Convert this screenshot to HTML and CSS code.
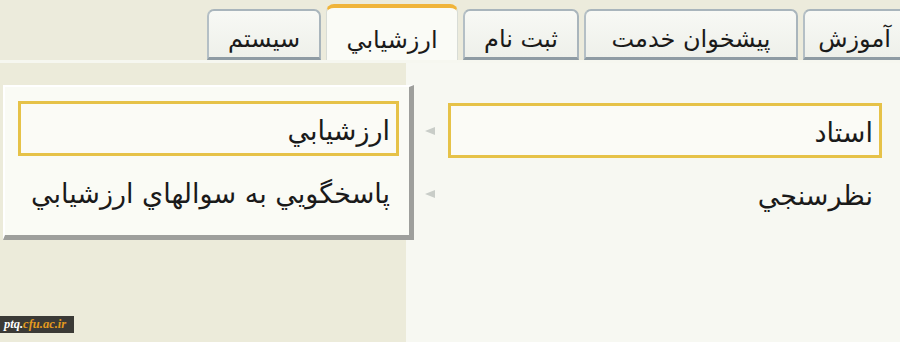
FILE: index.html
```html
<!DOCTYPE html>
<html lang="fa">
<head>
<meta charset="utf-8">
<title>ارزشيابي</title>
<link rel="stylesheet" href="styles.css">
</head>
<body>
<div class="page">
  <div class="tabbar" dir="rtl">
    <div class="tab tab--w110">آموزش</div>
    <div class="tab tab--w214">پيشخوان خدمت</div>
    <div class="tab tab--w116">ثبت نام</div>
    <div class="tab tab--active">ارزشيابي</div>
    <div class="tab tab--w114">سيستم</div>
  </div>
  <div class="content">
    <div class="left-panel"></div>
    <div class="right-panel" dir="rtl">
      <div class="row">
        <div class="item item--selected">استاد</div>
        <div class="arrow"></div>
      </div>
      <div class="row">
        <div class="item">نظرسنجي</div>
        <div class="arrow"></div>
      </div>
    </div>
  </div>
  <div class="popup" dir="rtl">
    <div class="item item--selected">ارزشيابي</div>
    <div class="item">پاسخگويي به سوالهاي ارزشيابي</div>
  </div>
  <div class="watermark"><span class="wm-a">ptq.</span><span class="wm-b">cfu.ac.ir</span></div>
</div>
</body>
</html>
```
FILE: styles.css
```css
* { box-sizing: border-box; }
html, body { margin: 0; padding: 0; }
body {
  width: 900px;
  height: 342px;
  overflow: hidden;
  font-family: "DejaVu Sans", "Liberation Sans", sans-serif;
  color: #1a1a1a;
  background: #f7f8f2;
}
.page {
  position: relative;
  width: 900px;
  height: 342px;
  overflow: hidden;
  display: flex;
  flex-direction: column;
}
.tabbar {
  height: 60px;
  flex: none;
  display: flex;
  align-items: flex-end;
  gap: 5px;
  margin-right: -13px;
  background: #ecebdc;
}
.tab {
  flex: none;
  height: 51px;
  display: flex;
  align-items: center;
  justify-content: center;
  font-size: 24px;
  line-height: 1;
  padding-top: 10px;
  background: linear-gradient(#f8f9f5, #eef0ea);
  border: 2px solid #a9b5bc;
  border-bottom: 3px solid #8e9ba3;
  border-left-color: #b4bfc5;
  border-radius: 7px 7px 0 0;
  white-space: nowrap;
}
.tab--w110 { width: 110px; justify-content: flex-start; padding-right: 20px; }
.tab--w214 { width: 214px; }
.tab--w116 { width: 116px; }
.tab--w114 { width: 114px; }
.tab--active {
  width: 132px;
  height: 56px;
  padding-top: 12px;
  background: #fafbf6;
  border: 1px solid #d8dcd6;
  border-top: 4px solid #f0b43a;
  border-bottom: none;
  border-radius: 8px 8px 0 0;
}
.content {
  flex: 1;
  display: flex;
  border-top: 3px solid #f6f7f0;
}
.left-panel {
  width: 406px;
  flex: none;
  background: #ecebda;
}
.right-panel {
  flex: 1;
  background: #f7f8f2;
  padding: 40px 18px 0 0;
  display: flex;
  flex-direction: column;
  gap: 8px;
}
.row {
  display: flex;
  align-items: center;
}
.item {
  flex: 1;
  height: 55px;
  display: flex;
  align-items: center;
  padding: 3px 6px 0;
  font-size: 27px;
  border: 3px solid transparent;
  white-space: nowrap;
}
.item--selected {
  border-color: #e6c248;
  background: #fbfbf6;
}
.arrow {
  width: 42px;
  display: flex;
  justify-content: center;
}
.arrow::before {
  content: "";
  border-style: solid;
  border-width: 4px 10px 4px 0;
  border-color: transparent #c9cdc8 transparent transparent;
  margin-left: 6px;
}
.popup {
  position: absolute;
  left: 3px;
  top: 85px;
  width: 411px;
  height: 155px;
  background: #fafbf5;
  border-top: 2px solid #ffffff;
  border-left: 2px solid #ffffff;
  border-right: 5px solid #9e9f9c;
  border-bottom: 5px solid #9e9f9c;
  padding: 14px 10px 0 13px;
  display: flex;
  flex-direction: column;
  gap: 8px;
}
.popup .item { flex: none; }
.watermark {
  position: absolute;
  left: 0;
  top: 316px;
  height: 17px;
  width: 74px;
  background: #3b3a36;
  font-family: "Liberation Serif", serif;
  font-weight: bold;
  font-style: italic;
  font-size: 12.5px;
  line-height: 17px;
  padding-left: 4px;
  white-space: nowrap;
  overflow: hidden;
}
.wm-a { color: #ffffff; }
.wm-b { color: #e39a1e; }
```
